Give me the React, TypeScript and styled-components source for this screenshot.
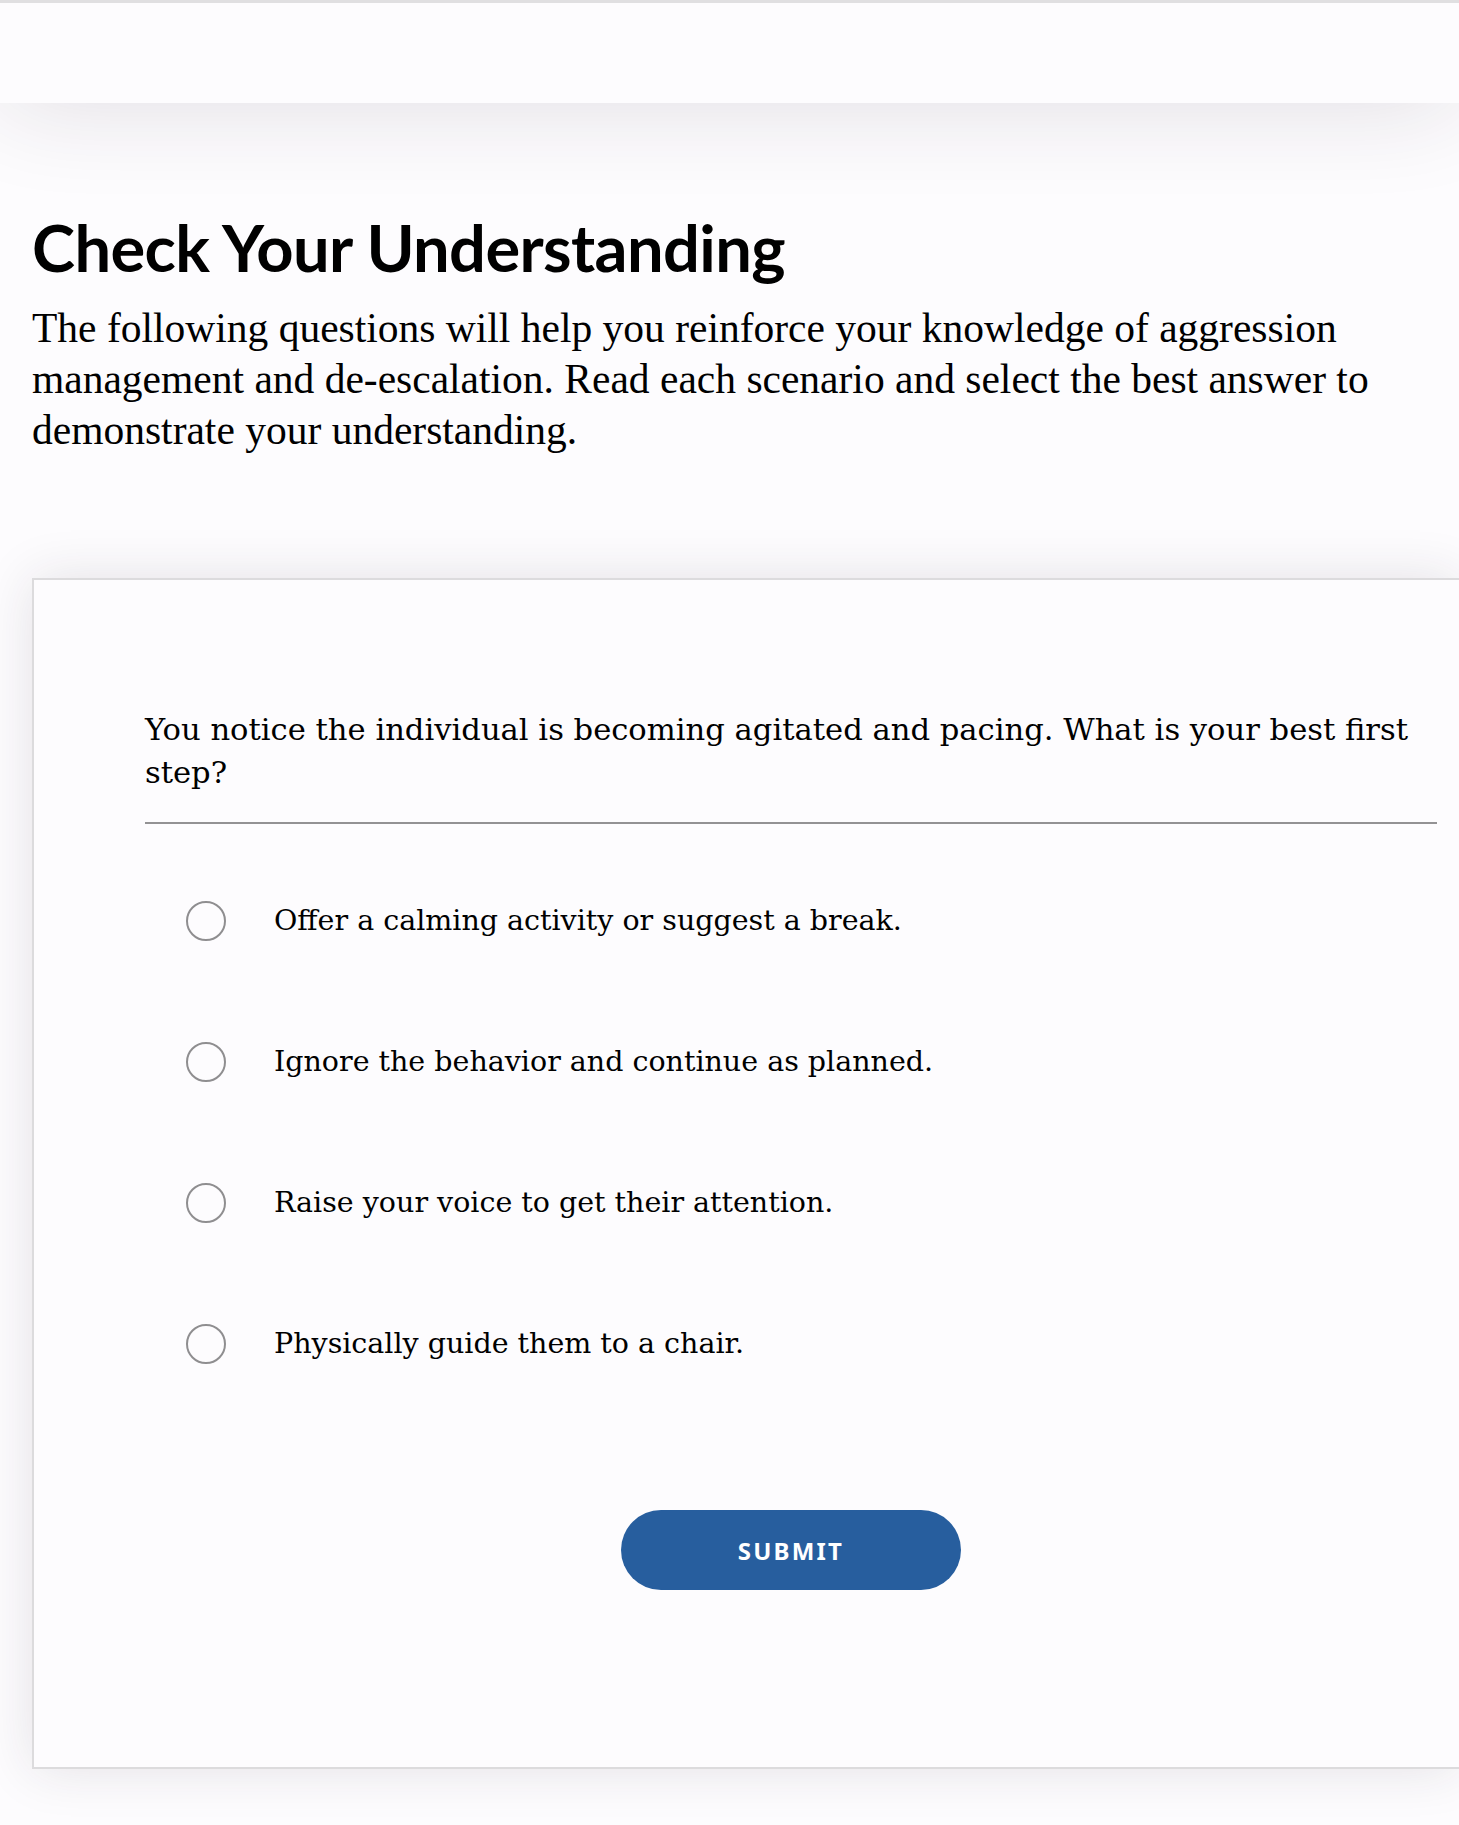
import styled, { createGlobalStyle } from "styled-components";

const GlobalStyle = createGlobalStyle`
  html, body {
    margin: 0;
    padding: 0;
    background: #fdfcfe;
    overflow-x: hidden;
  }
  * {
    box-sizing: border-box;
  }
`;

const OPTIONS = [
  "Offer a calming activity or suggest a break.",
  "Ignore the behavior and continue as planned.",
  "Raise your voice to get their attention.",
  "Physically guide them to a chair.",
];

const App = () => {
  /* MAIN RETURN */
  return (
    <Page>
      <GlobalStyle />
      <TopBar />
      <Main>
        <Title>Check Your Understanding</Title>
        <Intro>
          The following questions will help you reinforce your knowledge of aggression
          management and de-escalation. Read each scenario and select the best answer to
          demonstrate your understanding.
        </Intro>

        <Card>
          <Question>
            You notice the individual is becoming agitated and pacing. What is your best
            first step?
          </Question>
          <Divider />
          <OptionList>
            {OPTIONS.map((text) => (
              <Option key={text}>
                <Radio type="radio" name="q1" />
                <OptionText>{text}</OptionText>
              </Option>
            ))}
          </OptionList>
          <Actions>
            <SubmitButton type="button">Submit</SubmitButton>
          </Actions>
        </Card>
      </Main>
    </Page>
  );
};

export default App;

const Page = styled.div`
  min-height: 1825px;
  background: #fdfcfe;
`;

const TopBar = styled.header`
  position: relative;
  z-index: 2;
  height: 103px;
  border-top: 3px solid #e0dfe1;
  background: #fdfcfe;
  box-shadow: 0 0 100px rgba(40, 30, 50, 0.14);
`;

const Main = styled.main`
  position: relative;
  z-index: 1;
  padding: 0 0 60px 32px;
`;

const Title = styled.h1`
  margin: 0;
  padding-top: 104px;
  font-family: Lato, "Liberation Sans", sans-serif;
  font-weight: 700;
  font-size: 65px;
  line-height: 80px;
  letter-spacing: -0.6px;
  color: #000;
`;

const Intro = styled.p`
  margin: 16px 0 0;
  padding-right: 20px;
  font-family: "Liberation Serif", serif;
  font-size: 41.5px;
  line-height: 51px;
  color: #000;
`;

const Card = styled.section`
  margin-top: 122px;
  padding: 128px 22px 177px 111px;
  border: 2px solid #dcdbdd;
  border-right: none;
  background: #fdfcfe;
  box-shadow: 0 0 50px rgba(40, 30, 50, 0.12);
`;

const Question = styled.p`
  margin: 0;
  font-family: "DejaVu Serif", serif;
  font-size: 30.6px;
  line-height: 43px;
  color: #000;
`;

const Divider = styled.hr`
  margin: 28px 0 0;
  border: none;
  border-top: 2px solid #939294;
`;

const OptionList = styled.div`
  display: flex;
  flex-direction: column;
  gap: 101px;
  margin-top: 77px;
  padding-left: 41px;
`;

const Option = styled.label`
  display: flex;
  align-items: center;
  gap: 48px;
  cursor: pointer;
`;

const Radio = styled.input`
  appearance: none;
  margin: 0;
  width: 40px;
  height: 40px;
  flex: none;
  border: 2px solid #8f8e90;
  border-radius: 50%;
  background: #fdfcfe;

  &:checked {
    background: radial-gradient(circle, #275e9e 0 8px, #fdfcfe 9px);
  }
`;

const OptionText = styled.span`
  font-family: "DejaVu Serif", serif;
  font-size: 28.5px;
  line-height: 40px;
  color: #000;
`;

const Actions = styled.div`
  display: flex;
  justify-content: center;
  margin-top: 146px;
`;

const SubmitButton = styled.button`
  width: 340px;
  height: 80px;
  border: none;
  border-radius: 40px;
  background: #275e9e;
  color: #ffffff;
  font-family: "Noto Sans", Inter, sans-serif;
  font-weight: 700;
  font-size: 24px;
  letter-spacing: 2.2px;
  text-transform: uppercase;
  cursor: pointer;
`;
